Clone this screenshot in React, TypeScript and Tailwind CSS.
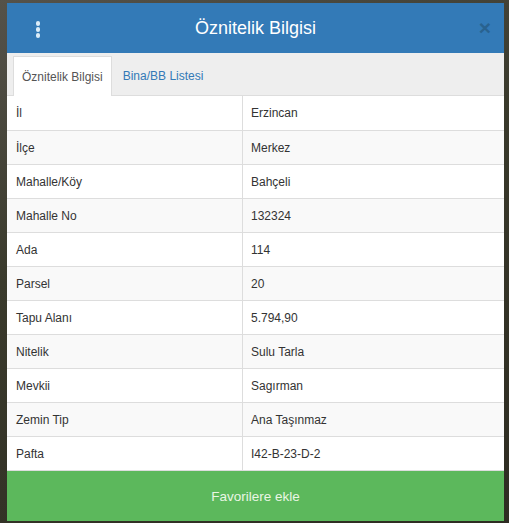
import React from 'react';

const rows: [string, string][] = [
  ['İl', 'Erzincan'],
  ['İlçe', 'Merkez'],
  ['Mahalle/Köy', 'Bahçeli'],
  ['Mahalle No', '132324'],
  ['Ada', '114'],
  ['Parsel', '20'],
  ['Tapu Alanı', '5.794,90'],
  ['Nitelik', 'Sulu Tarla'],
  ['Mevkii', 'Sagırman'],
  ['Zemin Tip', 'Ana Taşınmaz'],
  ['Pafta', 'I42-B-23-D-2'],
];

const App: React.FC = () => {
  return (
    <div className="h-[523px] w-[509px] overflow-hidden bg-[linear-gradient(160deg,#55524a_0%,#3a3a2c_40%,#2e2c22_100%)] pt-[3px] pl-[7px] font-['Liberation_Sans',Arial,sans-serif]">
      <div className="flex w-[497px] flex-col bg-white">
        {/* header */}
        <div className="relative flex h-[50px] items-center justify-center bg-[#337ab7]">
          <div className="absolute left-[22px] top-[18px] flex w-[18px] flex-col items-center gap-[1.5px]">
            <span className="h-[4.5px] w-[4.5px] rounded-full bg-[#dcecf8]" />
            <span className="h-[4.5px] w-[4.5px] rounded-full bg-[#dcecf8]" />
            <span className="h-[4.5px] w-[4.5px] rounded-full bg-[#dcecf8]" />
          </div>
          <h2 className="text-[18px] leading-none text-white">Öznitelik Bilgisi</h2>
          <span className="absolute right-[13px] top-[14px] text-[21px] font-bold leading-none text-[#29628f]">
            ×
          </span>
        </div>

        {/* tabs */}
        <div className="flex border-b border-[#dddddd] bg-[#eeeeee] pl-[6px] pt-[3px]">
          <div className="-mb-px flex h-[40px] items-center border border-b-0 border-[#dddddd] bg-white px-2 text-[12px] text-[#555555]">
            Öznitelik Bilgisi
          </div>
          <div className="ml-[2px] flex h-[39px] items-center border border-transparent px-2 text-[12px] text-[#337ab7]">
            Bina/BB Listesi
          </div>
        </div>

        {/* table */}
        <div className="border-b border-[#dddddd]">
          {rows.map(([label, value], i) => (
            <div
              key={label}
              className={`flex h-[34px] text-[12px] text-[#333333] ${i > 0 ? 'border-t border-[#dddddd]' : ''} ${
                i % 2 === 1 ? 'bg-[#f9f9f9]' : 'bg-white'
              }`}
            >
              <div className="flex w-[236px] items-center border-r border-[#dddddd] px-[9px]">{label}</div>
              <div className="flex flex-1 items-center px-2">{value}</div>
            </div>
          ))}
        </div>

        {/* footer */}
        <button
          type="button"
          className="flex h-[50px] items-center justify-center bg-[#5cb85c] pt-[2px] text-[13.5px] text-[#eaf6e4]"
        >
          Favorilere ekle
        </button>
      </div>
    </div>
  );
};

export default App;
